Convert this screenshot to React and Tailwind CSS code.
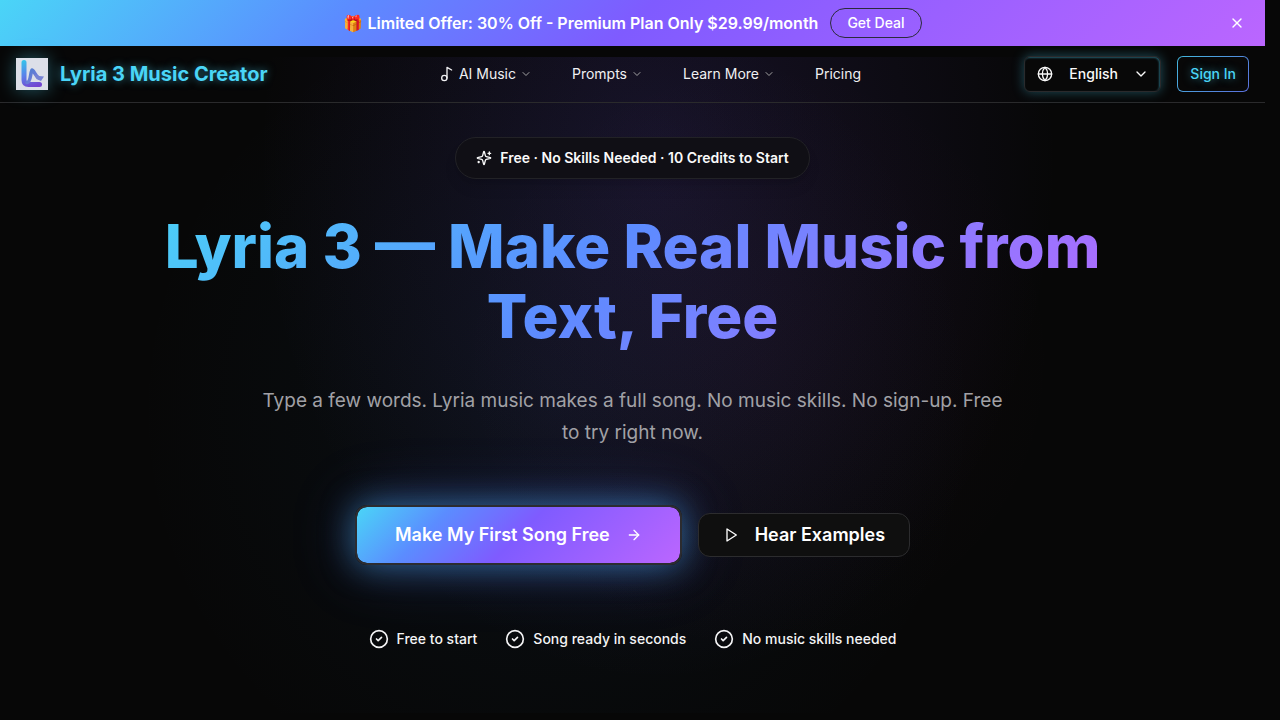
import React from "react";
import { ArrowRight, ChevronDown, CircleCheck, Globe, Music2, X } from "lucide-react";

function LogoMark() {
  return (
    <svg viewBox="0 0 32 32" className="h-8 w-8 shadow-[0_0_18px_rgba(74,210,240,0.4)]" aria-hidden="true">
      <defs>
        <linearGradient id="stem" gradientUnits="userSpaceOnUse" x1="8" y1="2" x2="18" y2="29">
          <stop offset="0" stopColor="#35c5ea" />
          <stop offset="0.5" stopColor="#5a82ea" />
          <stop offset="1" stopColor="#7444d0" />
        </linearGradient>
        <linearGradient id="wave" x1="0" y1="0" x2="1" y2="1">
          <stop offset="0" stopColor="#4f7fd0" />
          <stop offset="1" stopColor="#7d78dc" />
        </linearGradient>
      </defs>
      <rect width="32" height="32" fill="#dcdfe8" />
      <path d="M8 4.500V22Q8 26.500 12.500 26.500H23.500" fill="none" stroke="url(#stem)" strokeWidth="5" strokeLinecap="round" strokeLinejoin="round" />
      <path d="M11 24.500C15 24 14 16 16 12C18 12 19 18 23 20" fill="none" stroke="url(#wave)" strokeWidth="3.500" strokeLinecap="round" strokeLinejoin="round" />
      <path d="M18.500 16L23 18L28 18.500L25 23L20.500 21Z" fill="#7683d4" />
    </svg>
  );
}

function SparklesIcon() {
  return (
    <svg viewBox="0 0 24 24" className="h-4 w-4" fill="none" stroke="currentColor" strokeWidth="2" strokeLinecap="round" strokeLinejoin="round" aria-hidden="true">
      <path d="M9.937 15.500A2 2 0 0 0 8.500 14.063l-6.135-1.582a.5.500 0 0 1 0-.962L8.500 9.936A2 2 0 0 0 9.937 8.500l1.582-6.135a.5.500 0 0 1 .963 0L14.063 8.500A2 2 0 0 0 15.500 9.937l6.135 1.581a.5.500 0 0 1 0 .964L15.500 14.063a2 2 0 0 0-1.437 1.437l-1.582 6.135a.5.500 0 0 1-.963 0z" />
      <path d="M20 3v4M22 5h-4M4 17v2M5 18H3" />
    </svg>
  );
}

function PlayIcon() {
  return (
    <svg viewBox="0 0 24 24" className="h-4 w-4" fill="none" stroke="currentColor" strokeWidth="2" strokeLinecap="round" strokeLinejoin="round" aria-hidden="true">
      <polygon points="6 3 20 12 6 21 6 3" />
    </svg>
  );
}

function Banner() {
  return (
    <div className="flex h-[46px] items-center bg-[linear-gradient(135deg,#4ad5f7_0%,#5b8cff_27%,#7f5bff_50%,#bb66ff_100%)] px-4 text-white">
      <div className="flex flex-1 items-center justify-center gap-3 pl-6">
        <p className="text-base font-semibold">🎁 Limited Offer: 30% Off - Premium Plan Only $29.99/month</p>
        <button className="h-[30px] rounded-full border border-[#2b2b3a] px-4 text-sm font-medium">Get Deal</button>
      </div>
      <button aria-label="Close" className="flex h-6 w-6 items-center justify-center">
        <X size={16} />
      </button>
    </div>
  );
}

function MenuButton({ icon, children }) {
  return (
    <button className="flex items-center pr-2">
      {icon}
      {children}
      <ChevronDown size={12} className="ml-1 text-[#a3a3a3]" />
    </button>
  );
}

function Header() {
  return (
    <header className="relative z-10 flex h-[57px] items-center justify-between border-b border-[#2a2a2c] px-4">
      <a href="#" className="flex items-center gap-3 text-xl font-bold text-[#4ad5f7] [text-shadow:0_0_8px_rgba(74,213,247,0.55)]">
        <LogoMark />
        Lyria 3 Music Creator
      </a>
      <nav className="flex items-center gap-8 pl-2 text-sm text-[#f0f0f2]">
        <MenuButton icon={<Music2 size={16} className="mr-1" />}>AI Music</MenuButton>
        <MenuButton>Prompts</MenuButton>
        <MenuButton>Learn More</MenuButton>
        <a href="#">Pricing</a>
      </nav>
      <div className="flex items-center gap-4">
        <div className="relative text-[#fafafa]">
          <Globe size={16} className="pointer-events-none absolute left-[13px] top-[10px]" />
          <select
            aria-label="Language"
            className="h-9 w-[137px] appearance-none rounded-md border border-[#2a2a2c] bg-[#080808] pl-11 text-sm font-medium shadow-[0_0_12px_rgba(74,213,247,0.35),inset_-1px_1px_2px_rgba(74,213,247,0.4)]"
          >
            <option>English</option>
          </select>
          <ChevronDown size={16} className="pointer-events-none absolute right-3 top-[10px]" />
        </div>
        <button className="h-9 rounded-md border border-transparent bg-[linear-gradient(#080808,#080808),linear-gradient(135deg,#43b8dc,#5a6fdc)] [background-clip:padding-box,border-box] [background-origin:border-box] px-3 text-sm font-medium text-[#4ad5f7] [text-shadow:0_0_8px_rgba(74,213,247,0.55)]">
          Sign In
        </button>
      </div>
    </header>
  );
}

const perks = ["Free to start", "Song ready in seconds", "No music skills needed"];

function Hero() {
  return (
    <main className="relative flex flex-col items-center px-4 pb-16 pt-[34px] text-center">
      <div className="pointer-events-none absolute inset-x-0 -top-[46px] bottom-0 bg-[radial-gradient(ellipse_400px_520px_at_52%_16%,rgba(118,82,232,0.14),transparent),radial-gradient(circle_420px_at_44%_54%,rgba(50,130,200,0.07),transparent),radial-gradient(circle_300px_at_60%_46%,rgba(180,50,120,0.04),transparent)]" />
      <div className="relative flex h-[42px] items-center gap-2 rounded-full border border-[#222226] bg-[#100f15] px-5 text-sm font-semibold text-[#fafafa] shadow-lg">
        <SparklesIcon />
        Free · No Skills Needed · 10 Credits to Start
      </div>
      <h1 className="relative mt-8 w-full max-w-[1024px] bg-[linear-gradient(135deg,#4ad5f7_0%,#5b8cff_45%,#7f7fff_65%,#bb66ff_100%)] bg-clip-text text-[60px] font-extrabold leading-[70px] text-transparent">
        Lyria 3 — Make Real Music from Text, Free
      </h1>
      <p className="relative mt-[34px] max-w-[750px] text-[19px] leading-8 text-[#a1a1a6]">
        Type a few words. Lyria music makes a full song. No music skills. No sign-up. Free to try right now.
      </p>
      <div className="relative mt-14 flex items-center gap-4 text-lg font-semibold text-white">
        <button className="flex h-[60px] items-center gap-4 rounded-xl border-2 border-[#2c2c30] bg-[linear-gradient(135deg,#4ad5f7_0%,#5b8cff_25%,#7f5bff_50%,#bb66ff_100%)] bg-origin-padding bg-clip-padding px-[38px] shadow-[0_0_32px_rgba(74,180,247,0.5),0_0_64px_rgba(91,110,255,0.3)]">
          Make My First Song Free
          <ArrowRight size={16} />
        </button>
        <button className="flex h-11 items-center gap-4 rounded-xl border border-[#2c2c2e] bg-[#0f0f0f] px-6">
          <PlayIcon />
          Hear Examples
        </button>
      </div>
      <ul className="relative mt-16 flex items-center gap-7 text-sm font-medium text-[#f4f4f5]">
        {perks.map((perk) => (
          <li key={perk} className="flex items-center gap-2">
            <CircleCheck size={20} strokeWidth={2} />
            {perk}
          </li>
        ))}
      </ul>
    </main>
  );
}

export default function App() {
  return (
    <div className="min-h-screen overflow-x-hidden bg-[#070707] pr-[15px] font-['Inter',sans-serif]">
      <Banner />
      <Header />
      <Hero />
    </div>
  );
}
